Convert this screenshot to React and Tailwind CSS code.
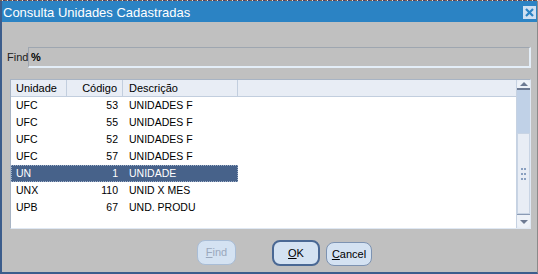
import React from 'react';

const rows = [
    { unidade: 'UFC', codigo: '53', descricao: 'UNIDADES F' },
    { unidade: 'UFC', codigo: '55', descricao: 'UNIDADES F' },
    { unidade: 'UFC', codigo: '52', descricao: 'UNIDADES F' },
    { unidade: 'UFC', codigo: '57', descricao: 'UNIDADES F' },
    { unidade: 'UN', codigo: '1', descricao: 'UNIDADE', selected: true },
    { unidade: 'UNX', codigo: '110', descricao: 'UNID X MES' },
    { unidade: 'UPB', codigo: '67', descricao: 'UND. PRODU' },
];

function ScrollBar() {
    return (
        <div className="w-[14px] flex flex-col bg-[#e8edf5] border-l border-[#c6d2e2]">
            {/* Up arrow */}
            <div className="h-[10px] flex items-center justify-center bg-[#eef2f8] border-b-2 border-[#6d7a92] rounded-t-[5px]">
                <div className="w-0 h-0 border-l-[4px] border-r-[4px] border-b-[4px] border-l-transparent border-r-transparent border-b-[#6d7a92]" />
            </div>
            {/* Track */}
            <div className="h-[43px] bg-[#c0d1e7]" />
            {/* Thumb */}
            <div className="flex-1 flex flex-col items-center justify-center gap-[3px] bg-[#e8edf5] border border-[#c8d4e4]">
                {[0, 1, 2].map(i => (
                    <div key={i} className="flex gap-[1px]">
                        <span className="w-[2px] h-[2px] bg-[#8aa0c0]" />
                        <span className="w-[2px] h-[2px] bg-[#8aa0c0]" />
                    </div>
                ))}
            </div>
            {/* Down arrow */}
            <div className="h-[14px] flex items-center justify-center bg-[#eef2f8] border-t border-[#8a9ab4] rounded-b-[5px]">
                <div className="w-0 h-0 border-l-[4px] border-r-[4px] border-t-[4px] border-l-transparent border-r-transparent border-t-[#6d7a92]" />
            </div>
        </div>
    );
}

function Btn({ children, className = '', disabled }) {
    return (
        <button
            className={`flex items-center justify-center rounded-[8px] text-[11px] ${disabled ? 'bg-[#d4e2f2] border border-[#a9bdd6] text-[#9aa8bc]' : 'bg-[#d4e2f2] border border-[#7d93b2] text-black'} ${className}`}
        >
            {children}
        </button>
    );
}

export default function App() {
    return (
        <div
            className="w-[538px] h-[274px] flex flex-col bg-[#c0c0c0] overflow-hidden"
            style={{ fontFamily: '"Liberation Sans", Arial, sans-serif' }}
        >
            {/* Desktop strip behind the window */}
            <div className="h-[1px] bg-[repeating-linear-gradient(90deg,#7a5e4a_0px,#7a5e4a_2px,#e8e0d0_2px,#e8e0d0_3px,#4a3d6a_3px,#4a3d6a_5px)]" />

            <div className="flex-1 flex flex-col border-l-2 border-b-2 border-r border-l-[#3c5d8c] border-b-[#3c5d8c] border-r-[#8a8a8a]">
                {/* Title bar */}
                <div className="h-[21px] bg-[#2b83c4] flex items-center justify-between pl-[1px] pr-[1px]">
                    <span className="text-white text-[13px] leading-none mt-[1px]">Consulta Unidades Cadastradas</span>
                    <div className="w-[13px] h-[13px] bg-[#cfe0f2] flex items-center justify-center mt-[1px]">
                        <svg width="9" height="9" viewBox="0 0 9 9">
                            <path d="M1 1 L8 8 M8 1 L1 8" stroke="#2b83c4" strokeWidth="2.2" />
                        </svg>
                    </div>
                </div>

                {/* Body */}
                <div className="flex-1 flex flex-col pl-[6px] pr-[6px]">
                    {/* Find row */}
                    <div className="flex items-center mt-[25px] h-[21px]">
                        <span className="text-[11px] text-[#202020] w-[21px] -ml-[1px]">Find</span>
                        <div className="flex-1 h-[21px] flex items-center px-[2px] border-t border-l border-t-[#9ea6b0] border-l-[#9ea6b0] border-b-2 border-r-2 border-b-[#e4eef8] border-r-[#e4eef8] text-[11px] font-bold text-black">
                            %
                        </div>
                    </div>

                    {/* List */}
                    <div className="mt-[11px] ml-[2px] h-[150px] flex bg-white border border-t-[#a8b4c4] border-l-[#a8b4c4] border-b-[#dfe8f3] border-r-[#dfe8f3]">
                        <div className="flex-1 flex flex-col">
                            <div className="h-[17px] flex bg-[#e8edf5] border-b border-[#c2cede] text-[11px] text-black">
                                <div className="w-[56px] pl-[5px] flex items-center border-r border-[#c2cede]">Unidade</div>
                                <div className="w-[56px] pr-[5px] flex items-center justify-end border-r border-[#c2cede]">Código</div>
                                <div className="w-[115px] pl-[6px] flex items-center border-r border-[#c2cede]">Descrição</div>
                                <div className="flex-1" />
                            </div>
                            {rows.map((r, i) => (
                                <div
                                    key={i}
                                    className={`h-[17px] w-[227px] flex items-center text-[10.5px] ${r.selected ? 'bg-[#47628a] text-white outline-1 outline-dotted outline-offset-[-1px] outline-[#9fb0c8]' : 'text-black'}`}
                                >
                                    <div className="w-[56px] pl-[5px]">{r.unidade}</div>
                                    <div className="w-[56px] pr-[5px] text-right">{r.codigo}</div>
                                    <div className="w-[115px] pl-[6px]">{r.descricao}</div>
                                </div>
                            ))}
                        </div>
                        <ScrollBar />
                    </div>

                    {/* Buttons */}
                    <div className="flex mt-[11px] h-[26px] items-start">
                        <Btn disabled className="ml-[189px] w-[39px] h-[25px]">
                            <span><span className="underline">F</span>ind</span>
                        </Btn>
                        <Btn className="ml-[36px] w-[48px] h-[26px] border-2 !border-[#4a6894]">
                            <span><span className="underline">O</span>K</span>
                        </Btn>
                        <Btn className="ml-[6px] mt-[2px] w-[46px] h-[24px]">
                            <span><span className="underline">C</span>ancel</span>
                        </Btn>
                    </div>
                </div>
            </div>
        </div>
    );
}
